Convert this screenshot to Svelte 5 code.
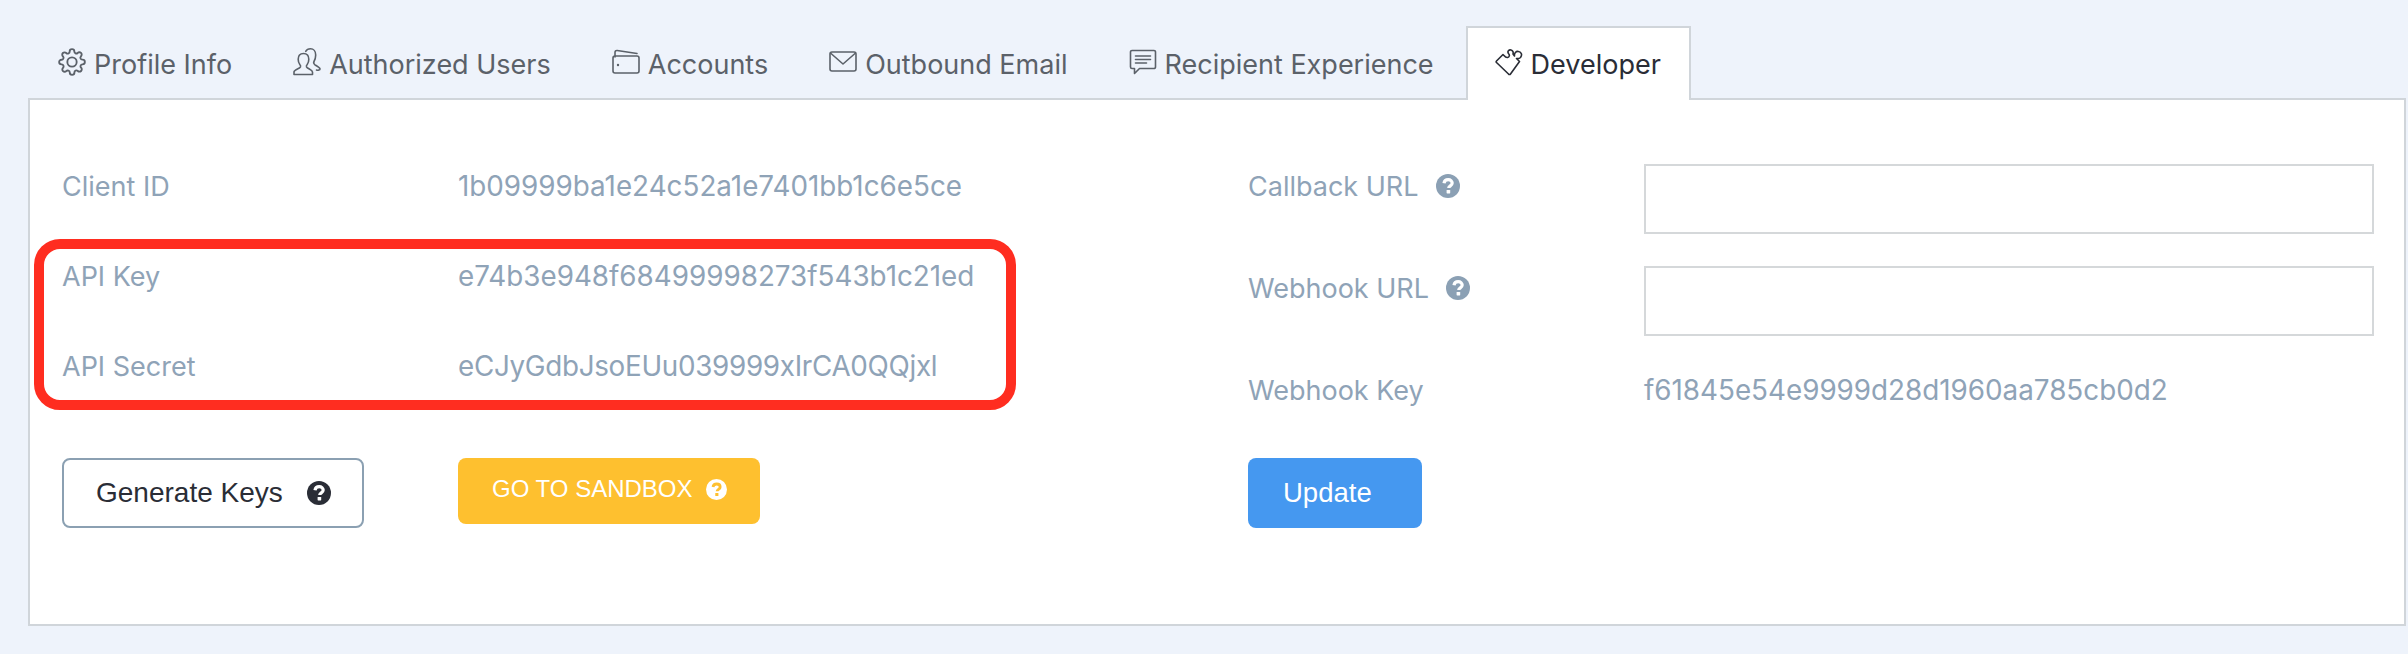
<script lang="ts">
	const tabs = [
		{ id: 'profile', label: 'Profile Info' },
		{ id: 'users', label: 'Authorized Users' },
		{ id: 'accounts', label: 'Accounts' },
		{ id: 'email', label: 'Outbound Email' },
		{ id: 'recipient', label: 'Recipient Experience' },
		{ id: 'developer', label: 'Developer' }
	];
	const active = 'developer';

	const keys = [
		{ label: 'Client ID', value: '1b09999ba1e24c52a1e7401bb1c6e5ce' },
		{ label: 'API Key', value: 'e74b3e948f68499998273f543b1c21ed' },
		{ label: 'API Secret', value: 'eCJyGdbJsoEUu039999xIrCA0QQjxl', tight: true }
	];
</script>

{#snippet help(cls)}
	<svg class="help {cls}" viewBox="0 0 24 24" aria-hidden="true">
		<circle class="disc" cx="12" cy="12" r="12" />
		<path class="mark" d="M8 9.2c.3-2.300 2-3.500 4.200-3.500 2.300 0 4 1.400 4 3.400 0 2.800-3.500 2.700-3.500 5" />
		<rect class="dot" x="10.600" y="16" width="3.600" height="3.400" rx=".6" />
	</svg>
{/snippet}

<div class="page">
	<nav class="tabs">
		{#each tabs as tab}
			<div class="tab" class:active={tab.id === active}>
				<svg class="icon" viewBox="0 0 28 28" aria-hidden="true">
					{#if tab.id === 'profile'}
						<g transform="scale(1.167)">
							<circle cx="12" cy="12" r="4" />
							<path d="M19.4 15a1.65 1.65 0 0 0 .33 1.82l.06.06a2 2 0 0 1 0 2.83 2 2 0 0 1-2.83 0l-.06-.06a1.65 1.65 0 0 0-1.82-.33 1.65 1.65 0 0 0-1 1.51V21a2 2 0 0 1-2 2 2 2 0 0 1-2-2v-.09A1.65 1.65 0 0 0 9 19.4a1.65 1.65 0 0 0-1.82.33l-.06.06a2 2 0 0 1-2.83 0 2 2 0 0 1 0-2.83l.06-.06a1.65 1.65 0 0 0 .33-1.82 1.65 1.65 0 0 0-1.51-1H3a2 2 0 0 1-2-2 2 2 0 0 1 2-2h.09A1.65 1.65 0 0 0 4.600 9a1.65 1.65 0 0 0-.33-1.82l-.06-.06a2 2 0 0 1 0-2.83 2 2 0 0 1 2.83 0l.06.06a1.65 1.65 0 0 0 1.82.33H9a1.65 1.65 0 0 0 1-1.51V3a2 2 0 0 1 2-2 2 2 0 0 1 2 2v.09a1.65 1.65 0 0 0 1 1.51 1.65 1.65 0 0 0 1.82-.33l.06-.06a2 2 0 0 1 2.83 0 2 2 0 0 1 0 2.83l-.06.06a1.65 1.65 0 0 0-.33 1.82V9a1.65 1.65 0 0 0 1.51 1H21a2 2 0 0 1 2 2 2 2 0 0 1-2 2h-.09a1.65 1.65 0 0 0-1.51 1z" />
						</g>
					{:else if tab.id === 'users'}
						<path d="M1 26.500h18.500v-2.500c0-2.300-5-3.300-6-5.200-.3-.8 0-1.500.7-2.300 1.200-1.500 1.600-3.400 1.600-5.300 0-3.700-2.200-5.700-5.300-5.700S5.200 7.500 5.200 11.200c0 1.900.4 3.800 1.600 5.300.7.800 1 1.500.7 2.300-1 1.900-6.500 2.900-6.500 5.200z" />
						<path d="M12.700 3.300C13.700 1.500 15.500.8 17.500.8c3 0 5.200 2.500 5.200 6.200 0 2.800-.8 5-1.700 6.500-.6 1.100-.3 2.300 1 3.300 1.500 1.100 5 2.700 5 4.200 0 1-2 1.500-3.500 1" />
					{:else if tab.id === 'accounts'}
						<path d="M3 9V4.500c0-1.300.8-2.200 2.200-2L25 5.500" />
						<rect x="1" y="8" width="26" height="17" rx="2" />
						<circle class="solid" cx="6" cy="17" r="1.200" />
					{:else if tab.id === 'email'}
						<rect x="1" y="4" width="26" height="19" rx="2" />
						<path d="M2 5.500l12 10.500 12-10.500" />
					{:else if tab.id === 'recipient'}
						<path d="M3 2.500h22a1.500 1.500 0 0 1 1.500 1.500v15a1.500 1.500 0 0 1-1.500 1.500H10.500L5.500 25.500v-5H3A1.500 1.500 0 0 1 1.500 19V4A1.500 1.500 0 0 1 3 2.500z" />
						<path d="M6.500 8h15M6.500 11.500h15M6.500 15h11" />
					{:else}
						<path d="M1.500 13L8 6.500c1.500 1.500 2.500 3.500 4.500 3 2-.5 2.500-2.500 1-4-1.500-2 .5-4 2.500-3.500 2 .5 2.500 2.500 2 4l1.500 2c-.5-3 1.500-5 4-4.500 3 .5 4 3.500 2 6-1 1-2.500 1.300-4 1l3 3L15.500 26c-.5.700-1.500.700-2 0L1.500 14.500c-.5-.5-.5-1 0-1.500z" />
					{/if}
				</svg>
				<span class="tab-label">{tab.label}</span>
			</div>
		{/each}
	</nav>

	<section class="panel">
		<div class="col left">
			{#each keys as row}
				<div class="row">
					<span class="label">{row.label}</span>
					<span class="value" class:tight={row.tight}>{row.value}</span>
				</div>
			{/each}
			<div class="actions">
				<button class="btn outline">Generate Keys {@render help('dark')}</button>
				<button class="btn sandbox">GO TO SANDBOX {@render help('light')}</button>
			</div>
		</div>

		<div class="col right">
			<div class="field">
				<span class="label">Callback URL {@render help('grey')}</span>
				<input type="text" />
			</div>
			<div class="field">
				<span class="label">Webhook URL {@render help('grey')}</span>
				<input type="text" />
			</div>
			<div class="field key">
				<span class="label">Webhook Key</span>
				<span class="value">f61845e54e9999d28d1960aa785cb0d2</span>
			</div>
			<button class="btn update">Update</button>
		</div>

		<div class="highlight"></div>
	</section>
</div>

<style>
	:global(body) {
		margin: 0;
		background: #eef3fb;
	}

	.page {
		height: 654px;
		padding: 26px 2px 0 28px;
		box-sizing: border-box;
		font-family: Inter, "Liberation Sans", sans-serif;
		font-size: 27px;
	}

	.tabs {
		display: flex;
		gap: 3px;
		height: 72px;
		padding-left: 1px;
		position: relative;
		z-index: 1;
	}

	.tab {
		display: flex;
		align-items: center;
		gap: 8px;
		height: 74px;
		padding: 0 27px 4px;
		box-sizing: border-box;
		border: 2px solid transparent;
		border-bottom: 0;
		color: #5b6169;
	}

	.tab.active {
		background: #fff;
		border-color: #d0d5da;
		color: #2a2d36;
		padding-right: 28px;
	}

	.tab-label {
		padding-top: 4px;
	}

	.icon {
		width: 28px;
		height: 28px;
		fill: none;
		stroke: currentColor;
		stroke-width: 1.6;
		stroke-linejoin: round;
		stroke-linecap: round;
		flex: none;
	}

	.icon .solid {
		fill: currentColor;
		stroke: none;
	}

	.panel {
		position: relative;
		display: flex;
		height: 528px;
		padding: 41px 30px 0;
		box-sizing: border-box;
		background: #fff;
		border: 2px solid #d0d5da;
	}

	.col {
		display: flex;
		flex-direction: column;
		flex: none;
	}

	.left {
		width: 1188px;
		padding-left: 2px;
		box-sizing: border-box;
	}

	.right {
		width: 1126px;
		padding-top: 23px;
		box-sizing: border-box;
	}

	.row {
		display: flex;
		align-items: center;
		height: 90px;
	}

	.row .label {
		width: 396px;
	}

	.label {
		display: flex;
		align-items: center;
		gap: 17px;
		color: #8fa3b7;
		flex: none;
	}

	.value {
		color: #8fa3b7;
		font-size: 27.8px;
	}

	.value.tight {
		letter-spacing: -0.3px;
	}

	.field {
		display: flex;
		align-items: flex-start;
		height: 70px;
		margin-bottom: 32px;
	}

	.field .label {
		width: 396px;
		height: 44px;
	}

	.field.key {
		align-items: center;
		height: 44px;
		margin-bottom: 46px;
	}

	input {
		width: 730px;
		height: 70px;
		box-sizing: border-box;
		border: 2px solid #d5d8da;
		background: #fff;
		outline: none;
	}

	.actions {
		display: flex;
		align-items: flex-start;
		margin-top: 47px;
	}

	.btn {
		display: flex;
		align-items: center;
		justify-content: flex-start;
		box-sizing: border-box;
		border-radius: 8px;
		font-family: "Liberation Sans", Arial, sans-serif;
		cursor: pointer;
	}

	.outline {
		width: 302px;
		height: 70px;
		margin-right: 94px;
		padding: 0 0 0 32px;
		gap: 24px;
		background: #fff;
		border: 2px solid #8ba0b2;
		color: #2a2d36;
		font-size: 28px;
	}

	.sandbox {
		width: 302px;
		height: 66px;
		padding: 0 0 4px 34px;
		gap: 13px;
		background: #fec02f;
		border: 0;
		color: #fff;
		font-size: 24px;
	}

	.update {
		width: 174px;
		height: 70px;
		padding: 0 0 0 35px;
		background: #4598f0;
		border: 0;
		color: #fff;
		font-size: 27.5px;
	}

	.help {
		width: 24px;
		height: 24px;
		flex: none;
	}

	.help .mark {
		fill: none;
		stroke-width: 3.200;
	}

	.help.dark .disc {
		fill: #2a2d36;
	}

	.help.dark .mark {
		stroke: #fff;
	}

	.help.dark .dot {
		fill: #fff;
	}

	.help.light {
		width: 21px;
		height: 21px;
	}

	.help.light .disc {
		fill: #fff;
	}

	.help.light .mark {
		stroke: #fec02f;
	}

	.help.light .dot {
		fill: #fec02f;
	}

	.help.grey .disc {
		fill: #8ba0b4;
	}

	.help.grey .mark {
		stroke: #fff;
	}

	.help.grey .dot {
		fill: #fff;
	}

	.highlight {
		position: absolute;
		left: 4px;
		top: 139px;
		width: 982px;
		height: 171px;
		box-sizing: border-box;
		border: 10px solid #ff2d20;
		border-radius: 26px;
		pointer-events: none;
	}
</style>
